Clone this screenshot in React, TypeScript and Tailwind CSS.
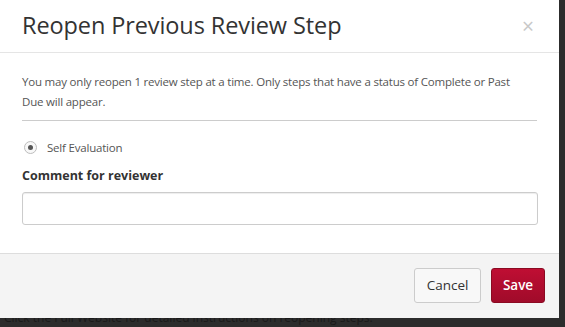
import React from "react";

export default function App() {
  return (
    <div
      className="w-[565px] h-[327px] bg-[#2c2c2c] overflow-hidden"
      style={{ fontFamily: '"Open Sans", "Noto Sans", sans-serif' }}
    >
      <div className="relative z-10 w-[559px] h-[318px] bg-white flex flex-col">
        <div className="h-[53px] flex items-center justify-between pl-[22px] pr-[25px] border-b border-[#e5e5e5]">
          <h1 className="text-[23.5px] text-[#333333] leading-none tracking-[-0.1px]">Reopen Previous Review Step</h1>
          <span className="text-[21px] text-[#c8c8c8] leading-none">×</span>
        </div>
        <div className="flex-1 px-[22px] pt-[19px]">
          <p className="w-[492px] text-[11.5px] leading-[20px] text-[#555555] tracking-[-0.2px]">
            You may only reopen 1 review step at a time. Only steps that have a status of Complete or Past Due will appear.
          </p>
          <div className="mt-[8px] border-t border-[#cccccc]" />
          <label className="mt-[18px] flex items-center gap-[10px] pl-[2px] text-[11.5px] text-[#555555] tracking-[-0.2px]">
            <span className="w-[13px] h-[13px] rounded-full border border-[#bdbdbd] bg-[#f8f8f8] flex items-center justify-center">
              <span className="w-[5px] h-[5px] rounded-full bg-[#555555]" />
            </span>
            Self Evaluation
          </label>
          <div className="mt-[11px] text-[12.5px] font-bold text-[#333333]">Comment for reviewer</div>
          <div className="mt-[6px] h-[33px] w-[516px] rounded-[3px] border border-[#cccccc] shadow-[inset_0_1px_1px_rgba(0,0,0,0.075)] bg-white" />
        </div>
        <div className="h-[65px] bg-[#f4f4f4] border-t border-[#dddddd] flex items-center justify-end gap-[10px] pr-[14px] pb-[1px]">
          <button className="h-[35px] w-[67px] rounded-[3px] border border-[#cccccc] bg-[#f8f8f8] text-[13.5px] text-[#333333]">
            Cancel
          </button>
          <button className="h-[35px] w-[54px] rounded-[3px] border border-[#8a0a22] bg-gradient-to-b from-[#bf0e33] to-[#a00b2a] text-[13.5px] font-semibold text-white">
            Save
          </button>
        </div>
      </div>
      <div className="-mt-[9px] pl-[4px] text-[12px] text-[#1a1a1a] whitespace-nowrap">
        Click the Full Website for detailed instructions on reopening steps.
      </div>
    </div>
  );
}
